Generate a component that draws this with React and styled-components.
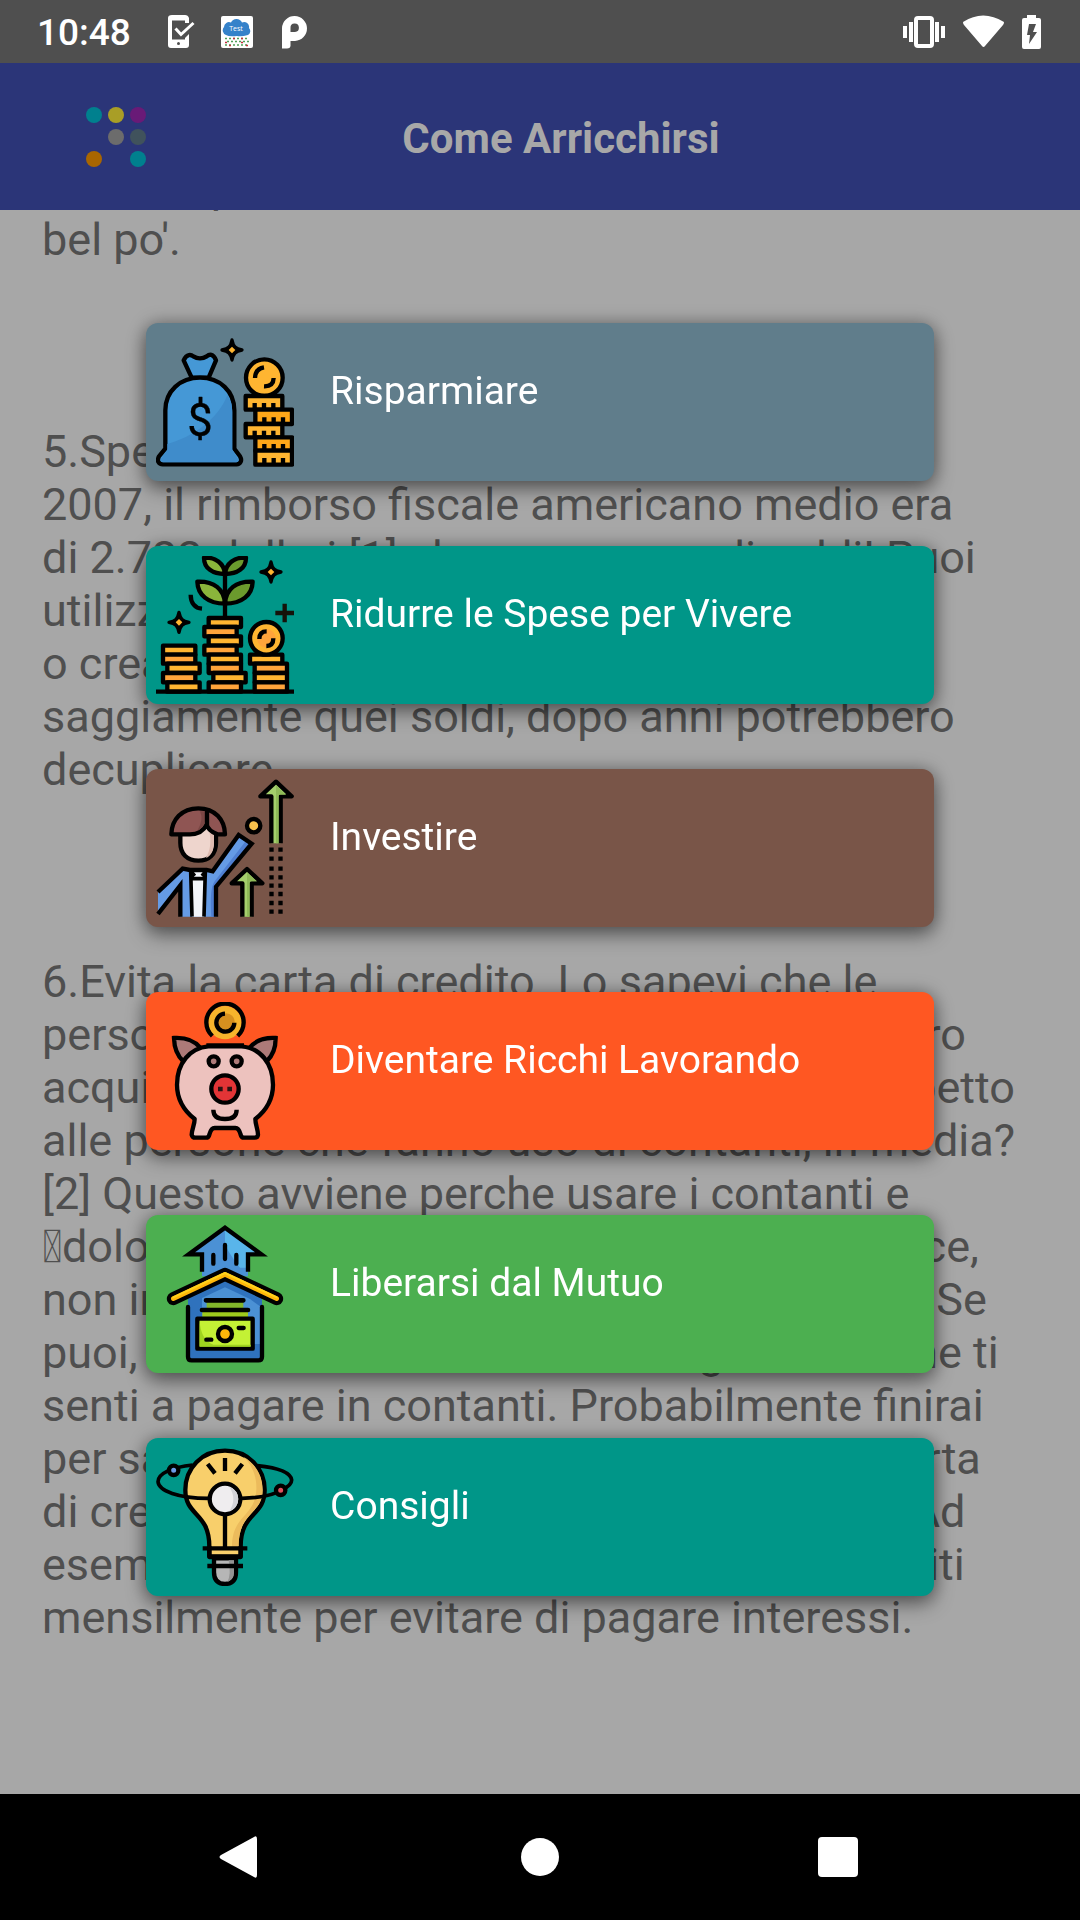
import React from "react";
import styled, { createGlobalStyle } from "styled-components";

const GlobalStyle = createGlobalStyle`
  *, *::before, *::after { box-sizing: border-box; }
  html, body { margin: 0; background: #000; }
  body { font-family: Roboto, "Noto Sans", sans-serif; }
`;

const Screen = styled.div`
  display: flex;
  flex-direction: column;
  height: 100vh;
  overflow: hidden;
`;

const StatusBar = styled.div`
  display: flex;
  align-items: center;
  justify-content: space-between;
  flex: none;
  height: 63px;
  padding: 0 39px 0 37px;
  background: #4f4f4f;
  color: #fff;
`;

const StatusGroup = styled.div`
  display: flex;
  align-items: center;
  gap: ${(p) => p.$gap}px;
`;

const Clock = styled.time`
  margin-right: 8px;
  padding-top: 2px;
  font-size: 37px;
  font-weight: 500;
  line-height: 44px;
`;

const Glyph = styled.svg`
  display: block;
  flex: none;
`;

const Header = styled.header`
  display: flex;
  align-items: center;
  flex: none;
  height: 147px;
  background: #2b3578;
`;

const LogoButton = styled.button`
  display: flex;
  justify-content: center;
  width: 232px;
  padding: 20px 0;
  border: 0;
  background: none;
`;

const Title = styled.h1`
  flex: 1;
  margin: 0 190px 0 0;
  padding-top: 4px;
  color: #a8a8a8;
  font-size: 42px;
  font-weight: 700;
  line-height: 50px;
  text-align: center;
`;

const Content = styled.main`
  display: flex;
  flex: 1;
  flex-direction: column;
  justify-content: flex-end;
  min-height: 0;
  overflow: hidden;
  padding: 0 42px 150px;
  background: #a7a7a7;
`;

const Paragraph = styled.p`
  flex: none;
  margin: 0 0 ${(p) => (p.$last ? 0 : 159)}px;
  color: #4f4f4f;
  font-size: 45px;
  line-height: 53px;
  white-space: pre;
`;

const NavBar = styled.nav`
  display: flex;
  align-items: center;
  justify-content: center;
  flex: none;
  gap: 240px;
  height: 126px;
  background: #000;
`;

const NavButton = styled.button`
  display: flex;
  padding: 0;
  border: 0;
  background: none;
`;

const Overlay = styled.div`
  position: fixed;
  inset: 0;
  display: flex;
  align-items: center;
  justify-content: center;
  padding: 0 146px 1px;
`;

const Menu = styled.div`
  display: flex;
  flex: 1;
  flex-direction: column;
  gap: 65px;
`;

const Card = styled.button`
  display: flex;
  align-items: flex-start;
  gap: 36px;
  padding: 10px;
  border: 0;
  border-radius: 12px;
  background: ${(p) => p.$color};
  box-shadow: 0 8px 20px rgba(0, 0, 0, 0.42), 0 0 18px rgba(0, 0, 0, 0.28);
  color: #fff;
  font-family: inherit;
  text-align: left;
`;

const CardLabel = styled.span`
  padding-top: 34px;
  font-size: 39px;
  line-height: 48px;
`;

const INK = "#000";
const GOLD = "#ffb531";
const ORANGE = "#ffa43b";

function CardIcon({ top, children }) {
  return (
    <Glyph
      width="138"
      height="138"
      viewBox={`48 ${top} 414 414`}
      fill="none"
      stroke={INK}
      strokeWidth="13"
      strokeLinejoin="round"
      aria-hidden="true"
    >
      {children}
    </Glyph>
  );
}

function Sparkle({ x, y }) {
  return (
    <g transform={`translate(${x} ${y})`}>
      <path
        d="M0 -30 C4 -10 10 -4 30 0 C10 4 4 10 0 30 C-4 10 -10 4 -30 0 C-10 -4 -4 -10 0 -30Z"
        fill={INK}
        strokeWidth="10"
      />
      <path d="M0 -10 L10 0 L0 10 L-10 0Z" fill={GOLD} stroke="none" />
    </g>
  );
}

function Coins({ rows }) {
  return rows.map(([x, y, w, h, fill]) => (
    <rect key={`${x}-${y}`} x={x} y={y} width={w} height={h} fill={fill} />
  ));
}

function SavingsIcon() {
  const ridged = [
    [317, 242, 110, 41, GOLD],
    [346, 283, 110, 43, "#ffa719"],
    [317, 326, 110, 40, GOLD],
    [346, 366, 110, 40, "#ffa719"],
    [346, 406, 110, 42, GOLD],
  ];
  return (
    <CardIcon top={53}>
      <path
        d="M155 187 L131 135 C140 114 154 118 160 123 C172 131 188 131 200 123 C208 116 220 114 228 135 L206 187Z"
        fill="#4598d6"
      />
      <path
        d="M76 400 V285 C76 228 120 187 180 187 C240 187 283 228 283 285 V400 L300 423 C308 437 300 447 290 447 H68 C56 447 50 437 57 423Z"
        fill="#4598d6"
      />
      <path
        d="M82 386 C160 365 235 310 262 240 Q277 262 277 290 V404 L294 430 Q296 440 288 441 H70 Q60 440 63 430 L82 404Z"
        fill="#3f8ccb"
        stroke="none"
      />
      <text
        x="180"
        y="363"
        textAnchor="middle"
        fontFamily="Roboto, sans-serif"
        fontSize="136"
        fontWeight="400"
        fill={INK}
        strokeWidth="1"
      >
        $
      </text>
      <Sparkle x={276} y={104} />
      <circle cx="373" cy="187" r="55" fill={GOLD} />
      <path d="M345 188 Q346 160 372 156 M401 188 Q400 214 372 213" />
      <Coins rows={ridged} />
      {ridged.map(([x, y, w, h]) => (
        <path
          key={`${x}-${y}`}
          d={`M${x + 27} ${y + h} v-20 M${x + 55} ${y + h} v-20 M${x + 83} ${y + h} v-20`}
        />
      ))}
    </CardIcon>
  );
}

function PlantIcon() {
  return (
    <CardIcon top={49}>
      <path d="M255 80 V235" />
      <path d="M255 103 C218 103 192 86 192 54 C226 52 252 70 255 103Z" fill="#8ab53b" />
      <path d="M255 103 C292 103 318 86 318 54 C284 52 258 70 255 103Z" fill="#6b9a2d" />
      <path d="M255 192 C204 192 173 166 172 126 C222 124 252 148 255 192Z" fill="#8ab53b" />
      <path d="M255 192 C306 192 337 166 338 126 C288 124 258 148 255 192Z" fill="#6b9a2d" />
      <path d="M152 165 C152 190 165 205 186 207" />
      <Sparkle x={393} y={97} />
      <Sparkle x={117} y={248} />
      <path d="M434 192 V248 M406 220 H462" stroke="#15130a" />
      <Coins
        rows={[
          [69, 318, 97, 27, GOLD],
          [69, 345, 97, 27, ORANGE],
          [82, 372, 97, 28, GOLD],
          [69, 400, 97, 28, ORANGE],
          [82, 428, 97, 28, GOLD],
          [206, 235, 97, 27, GOLD],
          [193, 262, 97, 28, ORANGE],
          [206, 290, 97, 28, GOLD],
          [193, 318, 97, 27, ORANGE],
          [206, 345, 97, 27, GOLD],
          [206, 372, 97, 28, ORANGE],
          [220, 400, 97, 28, GOLD],
          [206, 428, 97, 28, ORANGE],
          [330, 345, 97, 27, GOLD],
          [344, 372, 97, 28, ORANGE],
          [344, 400, 97, 28, GOLD],
          [344, 428, 97, 28, ORANGE],
        ]}
      />
      <circle cx="379" cy="296" r="49" fill={GOLD} />
      <circle cx="379" cy="296" r="28" fill={ORANGE} stroke="none" />
      <path d="M358 298 Q358 275 380 275 M400 296 Q400 319 379 319" />
      <path d="M48 456 H462" />
    </CardIcon>
  );
}

function InvestIcon() {
  const dots = [255, 282, 312, 338, 363, 388, 415, 441];
  return (
    <CardIcon top={43}>
      <path
        d="M54 378 L126 312 L216 322 L296 211 L334 237 L229 366 V456 H121 V366 L54 448Z"
        fill="#659be5"
        stroke="none"
      />
      <path
        d="M54 438 L121 356 V370 L58 448Z M234 350 L330 236 L318 228 L224 350 Q208 370 214 456 H229Z"
        fill="#4f7fd1"
        stroke="none"
      />
      <path d="M148 316 H200 L192 456 H156Z" fill="#f3f5fa" stroke="none" />
      <path
        d="M54 382 L128 312 L150 316 H200 L218 320 L296 211 L335 237 L228 366 V456 M121 456 V362 L54 448"
        strokeLinejoin="miter"
      />
      <path
        d="M152 318 L156 456 M196 318 L192 456 M156 342 H192 M150 316 L164 334 M200 316 L186 334"
        strokeWidth="11"
      />
      <path d="M121 205 V235 C121 268 142 288 175 288 C208 288 228 268 228 235 V205 L198 170 L150 190Z" fill="#eed5cd" />
      <path d="M222 205 V235 C222 258 212 275 198 280 C212 255 214 230 208 200Z" fill="#debbb0" stroke="none" />
      <path d="M94 209 C95 165 125 131 175 131 C225 131 254 165 255 209 H232 Q204 197 200 180 Q186 209 150 209Z" fill="#8f5553" />
      <path d="M180 140 Q192 165 172 198 Q192 188 195 170 V140Z" fill="#7a4644" stroke="none" />
      <path d="M201 133 V182" />
      <circle cx="341" cy="183" r="20" fill="#f7c14c" />
      <path d="M394 236 V95 H361 L408 51 L455 95 H422 V236" fill="#a4cf6c" />
      <path d="M408 62 L438 90 H416 V236 H408Z" fill="#8fba58" stroke="none" />
      <path d="M307 456 V356 H275 L321 313 L367 356 H335 V456" fill="#a4cf6c" />
      <path d="M321 324 L350 350 H329 V456 H321Z" fill="#8fba58" stroke="none" />
      {dots.map((y) => (
        <path key={y} d={`M388 ${y} h13 M415 ${y} h13`} />
      ))}
    </CardIcon>
  );
}

function PiggyIcon() {
  return (
    <CardIcon top={52}>
      <circle cx="255" cy="114" r="50" fill="#f6b42c" stroke="none" />
      <path d="M217 154 A56 56 0 1 1 293 154" />
      <circle cx="258" cy="112" r="26" fill="#d6901f" stroke="none" />
      <path d="M255 87 A27 27 0 1 0 283 114" />
      <path d="M130 230 Q103 205 102 160 Q155 157 182 190Z" fill="#ad7a78" strokeLinejoin="miter" />
      <path d="M380 230 Q407 205 407 160 Q355 157 328 190Z" fill="#ad7a78" strokeLinejoin="miter" />
      <path
        d="M205 185 C150 190 111 235 111 300 C111 345 135 380 164 403 C164 420 155 435 155 450 Q157 459 166 459 H198 Q206 459 208 450 C212 435 216 430 224 430 H286 C294 430 298 435 302 450 Q304 459 312 459 H344 Q353 459 354 450 C354 435 346 420 346 403 C375 380 399 345 399 300 C399 235 360 190 305 185Z"
        fill="#edc2be"
      />
      <path d="M199 182 H312" />
      <circle cx="221" cy="230" r="15" fill="#ad7a78" />
      <circle cx="290" cy="230" r="15" fill="#ad7a78" />
      <circle cx="255" cy="313" r="41" fill="#e23436" />
      <path d="M234 313 h14 M262 313 h14" stroke="#2b1312" />
      <path d="M220 375 Q220 403 255 403 Q290 403 290 375" />
    </CardIcon>
  );
}

function MortgageIcon() {
  return (
    <CardIcon top={46}>
      <path d="M186 200 V134 H148 L255 54 L362 134 H324 V200Z" fill="#4b91d5" stroke="none" />
      <path d="M255 54 L362 134 H324 V174 H300 Q258 120 255 100Z" fill="#59b5ea" stroke="none" />
      <path d="M144 265 L255 205 L366 265 V452 H144Z" fill="#2f72bd" stroke="none" />
      <path d="M186 265 L255 233 L330 268 L360 290 V403 H186Z" fill="#4b91d5" stroke="none" />
      <path d="M186 186 V134 H146 L255 54 L364 134 H324 V186" strokeLinejoin="miter" />
      <path d="M220 136 V162 M255 106 V148 M289 136 V162" strokeLinecap="round" />
      <path d="M100 267 L255 194 L410 267" strokeWidth="39" strokeLinecap="round" />
      <path d="M100 267 L255 194 L410 267" stroke="#ffb70a" strokeWidth="14" strokeLinecap="round" />
      <path d="M100 263 L255 190 L410 263" stroke="#ffd21c" strokeWidth="6" strokeLinecap="round" />
      <path d="M144 292 V441 Q144 452 155 452 H355 Q366 452 366 441 V292" strokeLinecap="round" />
      <path d="M200 272 H310 V300 H200Z" fill="#82b52b" stroke="none" />
      <path d="M187 302 H324 V326 H187Z" fill="#9dca1d" stroke="none" />
      <path d="M198 272 H310 M186 301 H324" strokeWidth="14" strokeLinecap="round" />
      <rect x="172" y="327" width="166" height="90" fill="#c3f135" />
      <path d="M179 334 Q182 390 220 405 H332 V411 H179Z" fill="#9fd31f" stroke="none" />
      <circle cx="255" cy="373" r="21" fill="#ffb70a" />
      <path d="M199 390 H214 M296 355 H311" strokeLinecap="round" />
    </CardIcon>
  );
}

function IdeaIcon() {
  return (
    <CardIcon top={39}>
      <path
        d="M208 335 C208 230 136 245 136 165 C136 100 185 47 255 47 C325 47 374 100 374 165 C374 245 302 230 302 335 V364 H208Z"
        fill="#f8cf6b"
      />
      <path
        d="M310 65 C345 85 368 120 368 165 C368 240 296 225 296 335 H276 C276 240 345 245 349 165 C351 125 337 90 310 65Z"
        fill="#ecbb5c"
        stroke="none"
      />
      <path d="M222 370 H288 V412 Q288 447 255 447 Q222 447 222 412Z" fill="#b6b6b6" />
      <path d="M266 376 H282 V412 Q282 434 262 441 Q274 420 266 376Z" fill="#949494" stroke="none" />
      <path d="M208 334 V366 H302 V334" />
      <path d="M188 340 H322 M202 393 H309 M255 240 V340" />
      <path d="M255 69 V108 M203 87 L225 115 M307 87 L285 115" />
      <path
        d="M158 90 C95 97 54 115 54 140 C56 168 115 190 205 190 M305 190 C375 188 405 178 426 164 C440 158 455 148 455 135 C452 112 410 98 352 92"
        strokeWidth="11"
      />
      <circle cx="255" cy="192" r="46" fill="#efedef" />
      <path d="M268 156 Q294 165 295 192 Q294 220 268 229 Q292 192 268 156Z" fill="#d3d3d8" stroke="none" />
      <circle cx="101" cy="106" r="14" fill="#6b9be8" />
      <circle cx="422" cy="166" r="14" fill="#e0525e" />
    </CardIcon>
  );
}

const ITEMS = [
  { label: "Risparmiare", color: "#607d8b", Icon: SavingsIcon },
  { label: "Ridurre le Spese per Vivere", color: "#009688", Icon: PlantIcon },
  { label: "Investire", color: "#795548", Icon: InvestIcon },
  { label: "Diventare Ricchi Lavorando", color: "#ff5722", Icon: PiggyIcon },
  { label: "Liberarsi dal Mutuo", color: "#4caf50", Icon: MortgageIcon },
  { label: "Consigli", color: "#009688", Icon: IdeaIcon },
];

const PARAGRAPHS = [
  ["avere risparmiato un", "bel po'."],
  [
    "5.Spendi con cura il rimborso fiscale. Nel",
    "2007, il rimborso fiscale americano medio era",
    "di 2.733 dollari [1] che e un sacco di soldi! Puoi",
    "utilizzare quei soldi per pagare i tuoi debiti",
    "o creare un fondo di emergenza. Se investi",
    "saggiamente quei soldi, dopo anni potrebbero",
    "decuplicare.",
  ],
  [
    "6.Evita la carta di credito. Lo sapevi che le",
    "persone che usano la carta di credito per i loro",
    "acquisti spenderebbero ogni mese di più rispetto",
    "alle persone che fanno uso di contanti, in media?",
    "[2] Questo avviene perche usare i contanti e",
    "\uF8FEdoloroso. Passare una carta di credito, invece,",
    "non implica mai lo stesso tipo di sofferenza. Se",
    "puoi, elimina la carta di credito e guarda come ti",
    "senti a pagare in contanti. Probabilmente finirai",
    "per saldare molto più spesso rispetto alla carta",
    "di credito fallo spesso in modo intelligente. Ad",
    "esempio, cerca sempre di ripagare tutti i debiti",
    "mensilmente per evitare di pagare interessi.",
  ],
];

const LOGO_DOTS = [
  [8, 8, "#00808e"],
  [30, 8, "#a99e26"],
  [52, 8, "#691a77"],
  [30, 30, "#6c6c6c"],
  [52, 30, "#40525c"],
  [8, 52, "#a96600"],
  [52, 52, "#00808e"],
];

function StatusIcons() {
  return (
    <StatusGroup $gap={25}>
      <Clock>10:48</Clock>
      <Glyph width="32" height="34" viewBox="0 0 32 34" fill="none" aria-hidden="true">
        <path
          d="M8 0 H21 Q24 0 25 3 V8 L21 8 V5.500 H8 V24.500 H21 V23 L25 19 V30 Q25 33 22 33 H7 Q4 33 4 30 V3 Q4 0 8 0Z"
          fill="#fff"
        />
        <path d="M11.500 13.500 L17 19.500 L29.500 8" stroke="#fff" strokeWidth="3" />
        <circle cx="14.500" cy="28.500" r="1.500" fill="#4f4f4f" />
      </Glyph>
      <Glyph width="32" height="32" viewBox="0 0 32 32" aria-hidden="true">
        <rect width="32" height="32" rx="2" fill="#fff" />
        <path
          d="M5 19 A5 5 0 0 1 3 11 A5 5 0 0 1 10 6.500 A6 6 0 0 1 21 6.500 A5 5 0 0 1 28 12 A4.500 4.500 0 0 1 27 19 Q20 21 16 20 Q8 21 5 19Z"
          fill="#3582ca"
        />
        <text x="15" y="15" textAnchor="middle" fontFamily="Open Sans, sans-serif" fontSize="7" fill="#fff">
          Test
        </text>
        <g fill="none" strokeWidth="1.500" strokeDasharray="2 2">
          <path d="M4 22.500 H28 M6 25.500 H28 M4 29 H28" stroke="#4f9f58" />
          <path d="M12 22.500 h2 M20 22.500 h2 M4 26.500 h2 M20 26.500 h2 M8 29.500 h2 M25 29.500 h2" stroke="#c3303b" />
        </g>
      </Glyph>
      <Glyph width="32" height="34" viewBox="0 0 32 34" aria-hidden="true">
        <path
          fillRule="evenodd"
          fill="#fff"
          d="M4 13 A12.500 12.500 0 1 1 17 26 H12.500 V31 Q12 33.500 9 33.500 H4Z M12.500 17 H17 A4.200 4.200 0 1 0 12.500 13Z"
        />
      </Glyph>
    </StatusGroup>
  );
}

function SystemIcons() {
  return (
    <StatusGroup $gap={18}>
      <Glyph width="42" height="34" viewBox="0 0 42 34" aria-hidden="true">
        <rect x="13" y="3" width="16" height="28" rx="2" fill="none" stroke="#fff" strokeWidth="4" />
        <path d="M0 11 h4 v12 h-4Z M6 7 h4 v20 h-4Z M32 7 h4 v20 h-4Z M38 11 h4 v12 h-4Z" fill="#fff" />
      </Glyph>
      <Glyph width="41" height="34" viewBox="0 0 41 34" aria-hidden="true">
        <path d="M0 7 Q20 -6 41 7 Q41 9 40 10 L22 31 Q20.500 33 19 31 L1 10 Q0 9 0 7Z" fill="#fff" />
      </Glyph>
      <Glyph width="19" height="34" viewBox="0 0 19 34" aria-hidden="true">
        <path
          fillRule="evenodd"
          fill="#fff"
          d="M5 0 H14 V3 H17 Q19 3 19 5 V32 Q19 34 17 34 H2 Q0 34 0 32 V5 Q0 3 2 3 H5Z M7 9 L5 20 H8 L7 29 L15 17 H11 L14 9Z"
        />
      </Glyph>
    </StatusGroup>
  );
}

export default function App() {
  return (
    <>
      <GlobalStyle />
      <Screen>
        <StatusBar>
          <StatusIcons />
          <SystemIcons />
        </StatusBar>
        <Header>
          <LogoButton type="button" aria-label="Menu">
            <Glyph width="60" height="60" viewBox="0 0 60 60" aria-hidden="true">
              {LOGO_DOTS.map(([x, y, fill]) => (
                <circle key={`${x}-${y}`} cx={x} cy={y} r="8" fill={fill} />
              ))}
            </Glyph>
          </LogoButton>
          <Title>Come Arricchirsi</Title>
        </Header>
        <Content>
          {PARAGRAPHS.map((lines, i) => (
            <Paragraph key={lines[0]} $last={i === PARAGRAPHS.length - 1}>
              {lines.join("\n")}
            </Paragraph>
          ))}
        </Content>
        <NavBar>
          <NavButton type="button" aria-label="Indietro">
            <Glyph width="60" height="60" viewBox="0 0 60 60" aria-hidden="true">
              <path d="M47 12 V48 Q47 52 44 50 L11 32 Q8 30 11 28 L44 10 Q47 8 47 12Z" fill="#fff" />
            </Glyph>
          </NavButton>
          <NavButton type="button" aria-label="Home">
            <Glyph width="60" height="60" viewBox="0 0 60 60" aria-hidden="true">
              <circle cx="30" cy="30" r="19" fill="#fff" />
            </Glyph>
          </NavButton>
          <NavButton type="button" aria-label="Recenti">
            <Glyph width="60" height="60" viewBox="0 0 60 60" aria-hidden="true">
              <rect x="8" y="10" width="40" height="40" rx="4" fill="#fff" />
            </Glyph>
          </NavButton>
        </NavBar>
      </Screen>
      <Overlay>
        <Menu role="menu" aria-label="Come Arricchirsi">
          {ITEMS.map(({ label, color, Icon }) => (
            <Card key={label} type="button" role="menuitem" $color={color}>
              <Icon />
              <CardLabel>{label}</CardLabel>
            </Card>
          ))}
        </Menu>
      </Overlay>
    </>
  );
}
